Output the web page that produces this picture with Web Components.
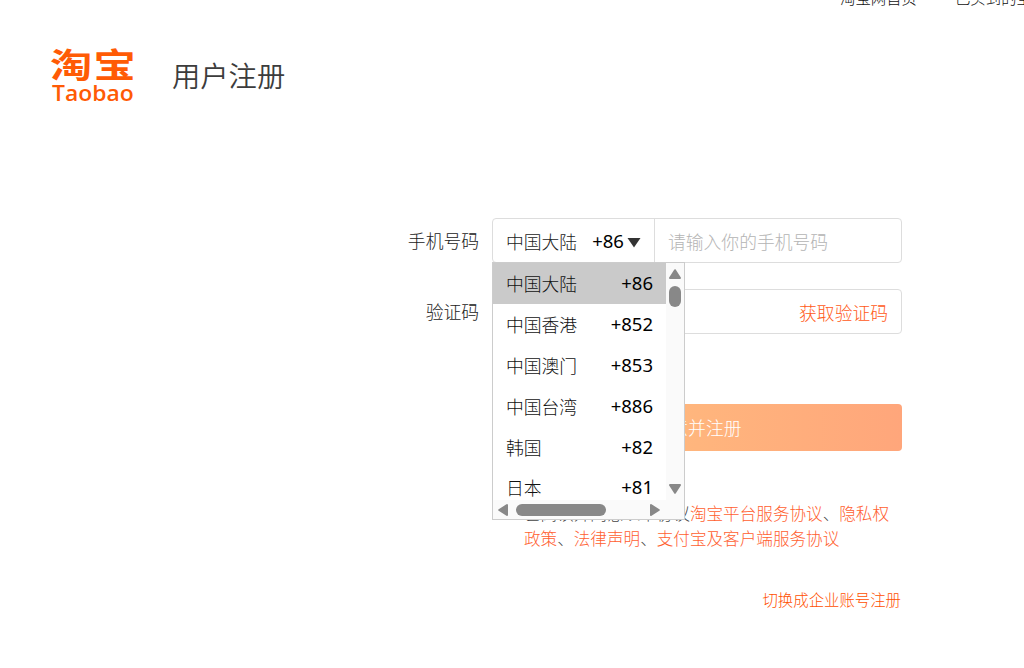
<!DOCTYPE html>
<html lang="zh-CN">
<head>
<meta charset="utf-8">
<title>用户注册</title>
<style>
    html, body {
        margin: 0;
        height: 668px;
        overflow: hidden;
        background: #fff;
    }
    body {
        font-family: "Noto Sans", "Noto Sans CJK SC", sans-serif;
        color: #3c3c3c;
    }
</style>
</head>
<body>
<register-page></register-page>

<script>
function define(name, html) {
    const template = document.createElement("template");
    template.innerHTML = html;
    customElements.define(name, class extends HTMLElement {
        constructor() {
            super();
            this.attachShadow({ mode: "open" });
            this.shadowRoot.appendChild(template.content.cloneNode(true));
        }
    });
}

define("site-nav", `
    <style>
        :host {
            display: flex;
            gap: 38px;
            height: 22px;
            margin-top: -14px;
            padding-left: 840px;
            font: 300 15.4px/22px "Noto Sans CJK SC", sans-serif;
            white-space: nowrap;
            color: #111;
        }
    </style>
    <span>淘宝网首页</span>
    <span>已买到的宝贝</span>
`);

define("taobao-logo", `
    <style>
        :host {
            display: block;
            width: 84px;
            height: 58px;
            color: #ff5b05;
        }
        div { white-space: nowrap; transform-origin: 0 50%; }
        .cn {
            font: 700 34px/34px "Noto Sans CJK SC", sans-serif;
            letter-spacing: 1px;
            transform: translateX(-1px) scaleX(1.24);
        }
        .en {
            font: 600 22px/22px "Open Sans", sans-serif;
            transform: translateX(1px) scaleX(1.04);
        }
    </style>
    <div class="cn">淘宝</div>
    <div class="en">Taobao</div>
`);

define("page-header", `
    <style>
        :host {
            display: flex;
            align-items: flex-start;
            gap: 37px;
            padding: 39px 0 0 51px;
            height: 170px;
            box-sizing: border-box;
        }
        h1 {
            margin: 6px 0 0;
            font: 350 28.3px/44px "Noto Sans CJK SC", sans-serif;
            color: #3c3c3c;
        }
    </style>
    <taobao-logo></taobao-logo>
    <h1><slot></slot></h1>
`);

define("form-row", `
    <style>
        :host {
            display: flex;
            align-items: center;
            height: 45px;
        }
        .label {
            width: 479px;
            margin: 0 13px 1px 0;
            text-align: right;
            font: 300 17.8px/24px "Noto Sans CJK SC", sans-serif;
            color: #222;
        }
        .field {
            display: flex;
            align-items: center;
            box-sizing: border-box;
            width: 410px;
            height: 45px;
            border: 1px solid #ddd;
            border-radius: 4px;
            background: #fff;
        }
    </style>
    <div class="label"><slot name="label"></slot></div>
    <div class="field"><slot></slot></div>
`);

define("scroll-arrow", `
    <style>
        :host { display: block; width: 14px; height: 12px; }
        :host([down]) { transform: rotate(180deg); }
        :host([left]) { transform: rotate(-90deg); }
        :host([right]) { transform: rotate(90deg); }
        svg { display: block; }
    </style>
    <svg width="14" height="12" viewBox="0 0 14 12">
        <path d="M7 2.2 12 10H2Z" fill="#888" stroke="#888" stroke-width="2" stroke-linejoin="round"/>
    </svg>
`);

define("country-option", `
    <style>
        :host {
            display: flex;
            justify-content: space-between;
            align-items: center;
            box-sizing: border-box;
            height: 40.8px;
            padding: 0 13px;
            font: 300 17.8px/24px "Noto Sans CJK SC", sans-serif;
            color: #111;
        }
        :host([selected]) { background: #cacaca; }
        .code { font: 400 18.5px/24px "Noto Sans", sans-serif; color: #000; }
    </style>
    <span><slot></slot></span>
    <span class="code"><slot name="code"></slot></span>
`);

define("country-select", `
    <style>
        :host {
            display: flex;
            align-items: center;
            position: relative;
            box-sizing: border-box;
            width: 162px;
            height: 43px;
            padding: 0 0 0 13px;
            border-right: 1px solid #ddd;
            font: 300 17.8px/24px "Noto Sans CJK SC", sans-serif;
            color: #222;
        }
        .code {
            margin: 0 3px 0 15px;
            font: 400 18.5px/24px "Noto Sans", sans-serif;
            color: #000;
        }
        .arrow { margin-top: 3px; }
        .menu {
            position: absolute;
            z-index: 2;
            top: 43px;
            left: -1px;
            display: grid;
            grid-template: 237px 19px / 173px 18px;
            border: 1px solid #ccc;
            background: #fafafa;
        }
        .list { overflow: hidden; background: #fff; }
        .v, .h { display: flex; align-items: center; }
        .v { flex-direction: column; padding: 5px 0; }
        .v i { width: 12px; height: 21px; margin: 6px 0 auto; }
        .h { padding: 0 4px 0 3px; }
        .h i { width: 90px; height: 12px; margin: 0 auto 0 6px; }
        i { border-radius: 6px; background: #888; }
    </style>
    <span>中国大陆</span>
    <span class="code">+86</span>
    <svg class="arrow" width="14" height="11" viewBox="0 0 14 11"><path d="M.5 1h13L7 10.5Z" fill="#333"/></svg>
    <div class="menu">
        <div class="list">
            <country-option selected>中国大陆<span slot="code">+86</span></country-option>
            <country-option>中国香港<span slot="code">+852</span></country-option>
            <country-option>中国澳门<span slot="code">+853</span></country-option>
            <country-option>中国台湾<span slot="code">+886</span></country-option>
            <country-option>韩国<span slot="code">+82</span></country-option>
            <country-option>日本<span slot="code">+81</span></country-option>
        </div>
        <div class="v"><scroll-arrow></scroll-arrow><i></i><scroll-arrow down></scroll-arrow></div>
        <div class="h"><scroll-arrow left></scroll-arrow><i></i><scroll-arrow right></scroll-arrow></div>
    </div>
`);

define("submit-button", `
    <style>
        :host { display: block; }
        button {
            display: block;
            width: 410px;
            height: 47px;
            padding: 0;
            border: 0;
            border-radius: 4px;
            background: linear-gradient(90deg, #ffc680, #ffb57d 50%, #ffa67b);
            font: 300 17.8px/47px "Noto Sans CJK SC", sans-serif;
            color: #fff;
        }
    </style>
    <button><slot></slot></button>
`);

define("user-agreement", `
    <style>
        :host {
            display: flex;
            gap: 13px;
            padding-left: 7px;
            font: 300 16.6px/24.5px "Noto Sans CJK SC", sans-serif;
            color: #444;
        }
        .box {
            box-sizing: border-box;
            width: 12px;
            height: 12px;
            margin-top: 6px;
            border: 1px solid #aaa;
            border-radius: 2px;
        }
        p { margin: 0; white-space: nowrap; }
        a { color: #ff6030; }
    </style>
    <span class="box"></span>
    <p>已阅读并同意以下协议<a>淘宝平台服务协议</a>、<a>隐私权<br>政策</a>、<a>法律声明</a>、<a>支付宝及客户端服务协议</a></p>
`);

define("register-page", `
    <style>
        :host {
            display: block;
            width: 1024px;
            height: 668px;
            overflow: hidden;
        }
        main { padding-top: 40px; }
        form-row { margin-bottom: 26px; }
        .placeholder, .get-code { font: 300 17.8px/24px "Noto Sans CJK SC", sans-serif; }
        .placeholder { margin: 1px 0 0 13px; color: #b4b4b4; }
        .get-code { margin: 0 13px 0 auto; color: #ff5a18; }
        submit-button { margin: 70px 0 0 492px; }
        user-agreement { margin: 50px 0 0 492px; }
        .switch {
            width: 901px;
            margin-top: 38px;
            text-align: right;
            font: 300 15.4px/22px "Noto Sans CJK SC", sans-serif;
            color: #ff5000;
        }
    </style>
    <site-nav></site-nav>
    <page-header>用户注册</page-header>
    <main>
        <form-row>
            <span slot="label">手机号码</span>
            <country-select></country-select>
            <span class="placeholder">请输入你的手机号码</span>
        </form-row>
        <form-row>
            <span slot="label">验证码</span>
            <span class="get-code">获取验证码</span>
        </form-row>
        <submit-button>同意并注册</submit-button>
        <user-agreement></user-agreement>
        <div class="switch">切换成企业账号注册</div>
    </main>
`);
</script>
</body>
</html>
